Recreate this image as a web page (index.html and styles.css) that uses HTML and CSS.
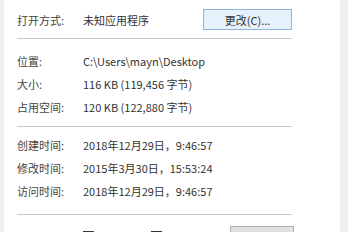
FILE: index.html
```html
<!DOCTYPE html>
<html lang="zh-CN">
<head>
<meta charset="utf-8">
<link rel="stylesheet" href="styles.css">
</head>
<body>
<div class="panel">
  <div class="row row-top">
    <span class="label">打开方式:</span>
    <span class="value grow">未知应用程序</span>
    <button class="btn btn-focus">更改(C)...</button>
  </div>
  <div class="sep sep-1"></div>
  <div class="group">
    <div class="row"><span class="label">位置:</span><span class="value">C:\Users\mayn\Desktop</span></div>
    <div class="row"><span class="label">大小:</span><span class="value">116 KB (119,456 字节)</span></div>
    <div class="row"><span class="label">占用空间:</span><span class="value">120 KB (122,880 字节)</span></div>
  </div>
  <div class="sep sep-2"></div>
  <div class="group">
    <div class="row"><span class="label">创建时间:</span><span class="value">2018年12月29日，9:46:57</span></div>
    <div class="row"><span class="label">修改时间:</span><span class="value">2015年3月30日，15:53:24</span></div>
    <div class="row"><span class="label">访问时间:</span><span class="value">2018年12月29日，9:46:57</span></div>
  </div>
  <div class="sep sep-3"></div>
  <div class="row row-attr">
    <span class="label">属性:</span>
    <label class="check"><span class="box"></span>只读(R)</label>
    <label class="check"><span class="box"></span>隐藏(H)</label>
    <button class="btn">高级(D)...</button>
  </div>
</div>
</body>
</html>
```
FILE: styles.css
```css
html, body {
  margin: 0;
  padding: 0;
}
body {
  background: #f0f0f0;
  width: 348px;
  height: 232px;
  overflow: hidden;
  font-family: "Noto Sans CJK SC", "Noto Sans", sans-serif;
  font-size: 11px;
  color: #333;
}
.panel {
  margin-left: 4px;
  width: 336px;
  height: 232px;
  background: #ffffff;
  box-sizing: border-box;
  padding: 9px 0 0 13px;
}
.row {
  display: flex;
  align-items: center;
  height: 23px;
  width: 275px;
}
.row-top {
  height: 21px;
}
.label {
  width: 66px;
  flex: none;
  color: #444;
}
.value {
  white-space: nowrap;
}
.grow {
  flex: 1;
}
.sep {
  height: 1px;
  width: 275px;
  background: #c8c8c8;
}
.sep-1 {
  margin: 8px 0 10px;
}
.sep-2 {
  margin: 8px 0 6px;
}
.sep-3 {
  margin: 12px 0 10px;
}
.group {
  display: flex;
  flex-direction: column;
}
.btn {
  font-family: inherit;
  font-size: 11px;
  color: #333;
  height: 21px;
  width: 89px;
  padding: 0;
  background: #e1e1e1;
  border: 1px solid #adadad;
}
.btn-focus {
  background: #e5f1fb;
  border-color: #8fb6da;
}
.row-attr .btn {
  width: 64px;
  margin-left: auto;
  margin-right: -2px;
}
.check {
  display: flex;
  align-items: center;
  gap: 5px;
  width: 68px;
  color: #444;
  white-space: nowrap;
}
.box {
  width: 11px;
  height: 11px;
  box-sizing: border-box;
  border: 1px solid #333;
  background: #fff;
}
```
